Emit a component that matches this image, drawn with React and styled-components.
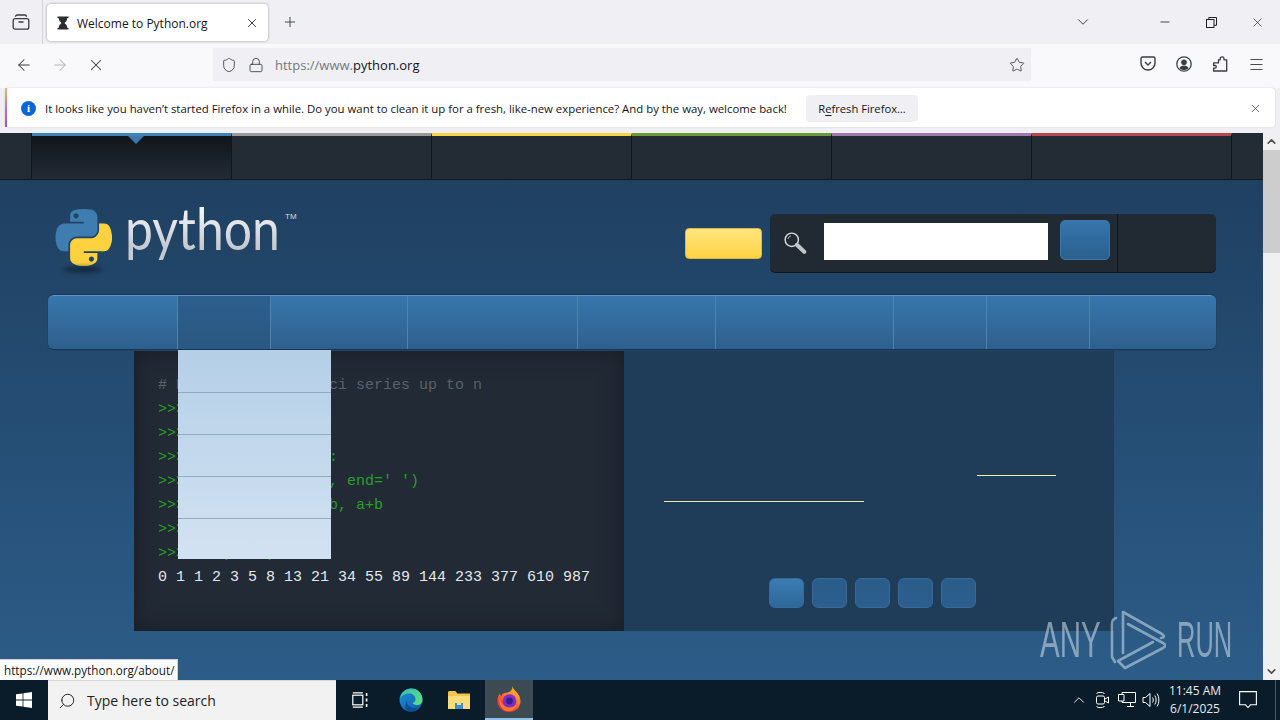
import styled, { createGlobalStyle } from "styled-components";
import { ArrowLeft, ArrowRight, X, Plus, ChevronDown, ChevronUp, Minus, Menu, Lock, Shield, Star, Search } from "lucide-react";

const UI_FONT = `"Open Sans", "Noto Sans", sans-serif`;
const ICON = "#3b3b45";

const Global = createGlobalStyle`
    html, body {
        margin: 0;
        padding: 0;
        width: 1280px;
        height: 720px;
        overflow: hidden;
        font-family: ${UI_FONT};
    }
    * {
        box-sizing: border-box;
    }
`;

const Screen = styled.div`
    width: 1280px;
    height: 720px;
    display: flex;
    flex-direction: column;
    overflow: hidden;
    background: #f0f0f4;
`;

/* browser chrome */
const TabStrip = styled.div`
    height: 44px;
    flex: none;
    display: flex;
    align-items: center;
    background: #f0f0f4;
`;

const ViewButton = styled.div`
    width: 43px;
    height: 44px;
    display: flex;
    align-items: center;
    justify-content: center;
    border-right: 1px solid #d4d4da;
`;

const Tab = styled.div`
    width: 221px;
    height: 37px;
    margin: 1px 0 0 4px;
    padding: 0 9px 0 9px;
    display: flex;
    align-items: center;
    gap: 7px;
    background: #fff;
    border-radius: 4px;
    box-shadow: 0 0 3px rgba(0, 0, 0, 0.35);
    font-size: 12px;
    color: #15141a;
`;

const TabTitle = styled.span`
    flex: 1;
    padding-top: 1px;
    white-space: nowrap;
`;

const NewTab = styled.div`
    width: 46px;
    margin-left: -1px;
    display: flex;
    justify-content: center;
`;

const StripSpacer = styled.div`
    flex: 1;
`;

const StripButton = styled.div`
    width: 46px;
    display: flex;
    justify-content: center;
    margin-right: ${(p) => p.$gap || 0}px;
`;

const NavBar = styled.div`
    height: 44px;
    flex: none;
    display: flex;
    align-items: center;
    padding: 0 0 3px 6px;
    background: #f9f9fb;
`;

const NavButton = styled.div`
    width: 36px;
    display: flex;
    justify-content: center;
    flex: none;
`;

const UrlBar = styled.div`
    width: 818px;
    height: 33px;
    margin-left: 99px;
    padding: 0 6px 0 8px;
    display: flex;
    align-items: center;
    gap: 11px;
    background: #f0f0f4;
    font-size: 13px;
    color: #15141a;
`;

const UrlText = styled.div`
    flex: 1;
    white-space: nowrap;
    span {
        color: #77777f;
    }
`;

const ToolButtons = styled.div`
    display: flex;
    margin-left: 99px;
`;

const ToolButton = styled.div`
    width: 36px;
    display: flex;
    justify-content: center;
`;

const NoticeWrap = styled.div`
    height: 45px;
    flex: none;
    padding: 0 5px;
    background: #f0f0f4;
`;

const Notice = styled.div`
    height: 39px;
    display: flex;
    align-items: center;
    padding: 1px 13px 0 16px;
    background: #fff;
    border-radius: 4px;
    box-shadow: 0 0 2px rgba(0, 0, 0, 0.15);
    position: relative;
    font-size: 11.38px;
    color: #15141a;
    &::before {
        content: "";
        position: absolute;
        left: 0;
        top: 0;
        bottom: 0;
        width: 2px;
        background: linear-gradient(#ffb06a, #d56ba8 50%, #8a5fd0);
    }
`;

const InfoDot = styled.div`
    width: 15px;
    height: 15px;
    margin-right: 9px;
    border-radius: 50%;
    background: #0d64db;
    color: #fff;
    display: flex;
    align-items: center;
    justify-content: center;
    font: bold 11px "Liberation Serif", serif;
`;

const NoticeText = styled.div`
    white-space: nowrap;
    width: 762px;
`;

const NoticeButton = styled.div`
    width: 112px;
    height: 27px;
    margin-left: -1px;
    display: flex;
    align-items: center;
    justify-content: center;
    background: #f0f0f4;
    border-radius: 4px;
    font-size: 11.2px;
    u {
        text-underline-offset: 2px;
    }
`;

const NoticeClose = styled.div`
    margin-left: auto;
    display: flex;
`;

/* page viewport */
const Viewport = styled.div`
    flex: 1;
    min-height: 0;
    display: flex;
    position: relative;
`;

const Page = styled.div`
    flex: 1;
    min-width: 0;
    position: relative;
    overflow: hidden;
    background: linear-gradient(#1f4061 0, #1f4061 47px, #2c5c88 100%);
`;

const MetaBar = styled.div`
    height: 47px;
    padding-left: 32px;
    display: flex;
    background: #232b35;
    border-bottom: 1px solid #141a21;
`;

const MetaTab = styled.div`
    width: 200px;
    border-top: 3px solid ${(p) => p.$color};
    border-right: 1px solid #11161c;
    position: relative;
    background: ${(p) => p.$active ? "linear-gradient(#10151a, #232b35)" : "transparent"};
    box-shadow: ${(p) => p.$active ? "-1px 0 0 #11161c" : "none"};
    &::after {
        content: ${(p) => p.$active ? '""' : "none"};
        position: absolute;
        left: 96px;
        top: 0;
        border: 8px solid transparent;
        border-top: 8px solid #3a78ad;
        border-bottom: 0;
    }
`;

const Header = styled.div`
    height: 115px;
    padding: 29px 47px 0 48px;
    display: flex;
    align-items: flex-start;
`;

const Logo = styled.div`
    display: flex;
    align-items: flex-start;
    margin-left: 7px;
    position: relative;
`;

const Wordmark = styled.div`
    width: 190px;
    margin: -19px -37px 0 13px;
    font: 400 58px/76px "Lato", sans-serif;
    white-space: nowrap;
    transform: scaleX(0.86);
    transform-origin: left center;
    background: linear-gradient(#f0f2f4 30%, #c4cad0 75%);
    -webkit-background-clip: text;
    background-clip: text;
    color: transparent;
`;

const Trademark = styled.div`
    margin: 3px 0 0 7px;
    font: 8px "Liberation Sans", sans-serif;
    color: #d6dade;
`;

const LogoShadow = styled.div`
    position: absolute;
    left: 8px;
    top: 57px;
    width: 40px;
    height: 7px;
    border-radius: 50%;
    background: rgba(10, 22, 34, 0.55);
    filter: blur(2px);
`;

const HeaderRight = styled.div`
    margin-left: auto;
    display: flex;
    align-items: center;
    gap: 8px;
    margin-top: 5px;
`;

const DonateButton = styled.div`
    width: 77px;
    height: 31px;
    margin-top: 1px;
    border-radius: 4px;
    border: 1px solid #e0b93f;
    background: linear-gradient(#ffe57e, #ffd343);
`;

const SearchPanel = styled.div`
    width: 446px;
    height: 58px;
    display: flex;
    align-items: center;
    padding-left: 13px;
    border-radius: 5px;
    background: #212a33;
    box-shadow: 0 1px 0 #11161c;
`;

const SearchInput = styled.div`
    width: 224px;
    height: 37px;
    margin: 0 12px 3px 17px;
    background: #fff;
`;

const GoButton = styled.div`
    width: 50px;
    height: 40px;
    margin-bottom: 6px;
    border-radius: 5px;
    border: 1px solid #3d77a8;
    background: linear-gradient(#3675ab, #2b5f8e);
`;

const PanelDivider = styled.div`
    width: 1px;
    height: 58px;
    margin-left: 7px;
    background: #10151b;
`;

const MainNav = styled.div`
    position: relative;
    width: 1168px;
    height: 54px;
    margin-left: 48px;
    display: flex;
    border-radius: 6px;
    border-top: 1px solid #5b93c4;
    background: linear-gradient(#3776ac, #33699a 60%, #2d5f8c);
    box-shadow: 0 1px 1px #17334d, 0 -1px 1px #1a3a58;
`;

const NavItem = styled.div`
    width: ${(p) => p.$w}px;
    flex: none;
    border-right: 1px solid #4f83b0;
    background: ${(p) => p.$hover ? "linear-gradient(#2d5f8d, #2a5882)" : "transparent"};
    position: relative;
    &:last-child {
        border-right: 0;
    }
`;

const Dropdown = styled.div`
    position: absolute;
    z-index: 3;
    left: 0;
    top: 54px;
    width: 153px;
    height: 209px;
    overflow: hidden;
    background: linear-gradient(#b4cfe7, #d3e2f2);
`;

const DropRow = styled.div`
    height: 42px;
    border-top: 1px solid #96aabd;
    &:first-child {
        border-top: 0;
    }
`;

const Hero = styled.div`
    width: 980px;
    height: 280px;
    margin: 2px 0 0 134px;
    display: flex;
`;

const CodePanel = styled.div`
    width: 490px;
    padding: 22px 0 0 24px;
    background: #222a35;
    box-shadow: inset 0 0 22px #171d25;
    white-space: pre;
`;

const CodeLine = styled.div`
    height: 24px;
    color: ${(p) => p.$color};
    font: 15px/25px "Liberation Mono", monospace;
`;

const SlidePanel = styled.div`
    width: 490px;
    position: relative;
    display: flex;
    align-items: flex-end;
    justify-content: center;
    padding: 0 0 23px 6px;
    gap: 8px;
    background: #1f3c59;
`;

const LinkLine = styled.div`
    position: absolute;
    left: ${(p) => p.$x}px;
    top: ${(p) => p.$y}px;
    width: ${(p) => p.$w}px;
    height: 1px;
    background: #f2eea0;
`;

const Dot = styled.div`
    width: 35px;
    height: 30px;
    border-radius: 6px;
    border: 1px solid #37699a;
    background: ${(p) => p.$on ? "linear-gradient(#3a7cb3, #2f6799)" : "linear-gradient(#2b5c8a, #2c5f8e)"};
`;

const PageScrollbar = styled.div`
    width: 17px;
    flex: none;
    display: flex;
    flex-direction: column;
    align-items: center;
    background: #f0f0f0;
`;

const ScrollArrow = styled.div`
    height: 17px;
    flex: none;
    display: flex;
    align-items: center;
    justify-content: center;
`;

const ScrollThumb = styled.div`
    width: 17px;
    height: 103px;
    background: #cdcdcd;
`;

const ScrollTrack = styled.div`
    flex: 1;
`;

const StatusTip = styled.div`
    position: absolute;
    z-index: 4;
    left: 0;
    bottom: 0;
    width: 178px;
    height: 21px;
    padding: 3px 0 0 4px;
    background: #fff;
    border-top: 1px solid #d0d0d0;
    border-right: 1px solid #d0d0d0;
    font-size: 11.7px;
    line-height: 15px;
    color: #15141a;
    white-space: nowrap;
`;

const Watermark = styled.div`
    position: absolute;
    z-index: 2;
    left: 1040px;
    top: 476px;
    height: 62px;
    display: flex;
    align-items: center;
    color: rgba(196, 213, 226, 0.6);
    font: 400 50px/62px "Liberation Sans", sans-serif;
`;

const WatermarkWord = styled.span`
    display: inline-block;
    width: ${(p) => p.$w}px;
    margin-right: ${(p) => p.$gap || 0}px;
    transform: scaleX(${(p) => p.$scale});
    transform-origin: left center;
    white-space: nowrap;
`;

const PlayWrap = styled.div`
    display: flex;
    margin-right: 11px;
`;

/* windows taskbar */
const Taskbar = styled.div`
    height: 40px;
    flex: none;
    display: flex;
    align-items: center;
    background: #0a1c29;
`;

const StartButton = styled.div`
    width: 48px;
    display: flex;
    justify-content: center;
`;

const SearchBox = styled.div`
    width: 288px;
    height: 40px;
    padding-left: 10px;
    display: flex;
    align-items: center;
    gap: 11px;
    background: #f2f2f2;
    border-top: 1px solid #d8d8d8;
    font-size: 14px;
    color: #222;
`;

const SearchGlass = styled(Search)`
    transform: scaleX(-1);
`;

const TaskIcon = styled.div`
    width: 48px;
    height: 40px;
    margin-left: ${(p) => p.$gap || 0}px;
    display: flex;
    align-items: center;
    justify-content: center;
    background: ${(p) => p.$active ? "#3d4a52" : "transparent"};
    border-bottom: ${(p) => p.$active ? "2px solid #8fc3ea" : "0"};
`;

const Tray = styled.div`
    margin-left: auto;
    display: flex;
    align-items: center;
    color: #fff;
`;

const TrayIcon = styled.div`
    width: 24px;
    display: flex;
    justify-content: center;
`;

const Clock = styled.div`
    width: 61px;
    padding-left: 3px;
    text-align: center;
    white-space: nowrap;
    font-size: 12px;
    line-height: 18px;
    color: #e6eaed;
`;

const NoticeCentre = styled.div`
    width: 48px;
    display: flex;
    justify-content: center;
`;

const ShowDesktop = styled.div`
    width: 5px;
    height: 40px;
    margin-left: 3px;
    border-left: 1px solid #4d5a63;
`;

const Hourglass = () => (
    <svg width="14" height="14" viewBox="0 0 14 14" fill="#2c2c33">
        <path d="M1.5 0.5h11v1.6h-1.2c0 2.4-1.4 3.8-2.8 4.9 1.4 1.1 2.8 2.5 2.8 4.9h1.2v1.6h-11v-1.6h1.2c0-2.4 1.4-3.8 2.8-4.9C4.1 5.9 2.7 4.5 2.7 2.1H1.5z" />
    </svg>
);

const FirefoxView = () => (
    <svg width="18" height="16" viewBox="0 0 18 16" fill="none" stroke={ICON} strokeWidth="1.3">
        <rect x="1.2" y="4.6" width="15.6" height="10.6" rx="2" />
        <path d="M3.5 2.8c0-.9.5-1.8 1.7-1.8h7.6c1.2 0 1.7.9 1.7 1.8M6.5 8h5" />
    </svg>
);

const RestoreIcon = () => (
    <svg width="11" height="11" viewBox="0 0 11 11" fill="none" stroke="#222" strokeWidth="1">
        <rect x="0.5" y="2.5" width="7.5" height="8" />
        <path d="M2.8 2.5V0.5h7.7v7.8H8" />
    </svg>
);

const PocketIcon = () => (
    <svg width="16" height="15" viewBox="0 0 16 15" fill="none" stroke={ICON} strokeWidth="1.4">
        <path d="M2.5 1h11c.9 0 1.5.6 1.5 1.5V7c0 3.8-3.1 7-7 7s-7-3.2-7-7V2.500C1 1.600 1.600 1 2.500 1z" />
        <path d="M5 6l3 3 3-3" />
    </svg>
);

const AccountIcon = () => (
    <svg width="16" height="16" viewBox="0 0 16 16">
        <circle cx="8" cy="8" r="7.2" fill="none" stroke={ICON} strokeWidth="1.3" />
        <circle cx="8" cy="6.2" r="2.8" fill={ICON} />
        <path d="M3.4 12.200c.8-1.800 2.600-2.600 4.600-2.600s3.800.8 4.600 2.600c-1.200 1.200-2.800 1.800-4.600 1.800s-3.400-.6-4.600-1.800z" fill={ICON} />
    </svg>
);

const ExtensionIcon = () => (
    <svg width="16" height="16" viewBox="0 0 16 16" fill="none" stroke={ICON} strokeWidth="1.3" strokeLinejoin="round">
        <path d="M6.500 3.800h1.700V2.600c0-2.300 3.800-2.300 3.800 0v1.200h2.700v11.200H1.600v-2.800h1.500c1.600 0 1.600-2.700 0-2.700H1.600V6.800h4.900z" />
    </svg>
);

const PythonLogo = () => (
    <svg width="57" height="57" viewBox="0 0 110 112">
        <path fill="#3f7cb0" d="M54.919 0.001C50.335 0.022 45.958 0.413 42.106 1.095C30.760 3.099 28.700 7.295 28.700 15.032V25.250H55.513V28.656H28.700H18.638C10.845 28.656 4.022 33.340 1.888 42.250C-0.574 52.463 -0.683 58.836 1.888 69.500C3.794 77.438 8.345 83.094 16.138 83.094H25.356V70.844C25.356 61.994 33.014 54.188 42.106 54.188H68.888C76.343 54.188 82.294 48.049 82.294 40.563V15.032C82.294 7.766 76.164 2.307 68.888 1.095C64.282 0.328 59.503 -0.020 54.919 0.001ZM40.419 8.219C43.189 8.219 45.450 10.518 45.450 13.344C45.450 16.160 43.189 18.438 40.419 18.438C37.639 18.438 35.388 16.160 35.388 13.344C35.388 10.518 37.639 8.219 40.419 8.219Z" />
        <path fill="#fdd23e" d="M85.638 28.656V40.563C85.638 49.794 77.812 57.563 68.888 57.563H42.106C34.770 57.563 28.700 63.841 28.700 71.188V96.719C28.700 103.985 35.019 108.259 42.106 110.344C50.593 112.839 58.732 113.290 68.888 110.344C75.638 108.389 82.294 104.456 82.294 96.719V86.500H55.513V83.094H82.294H95.700C103.493 83.094 106.397 77.658 109.106 69.500C111.905 61.101 111.786 53.025 109.106 42.250C107.181 34.492 103.503 28.656 95.700 28.656H85.638ZM70.575 93.313C73.355 93.313 75.606 95.591 75.606 98.407C75.606 101.233 73.355 103.532 70.575 103.532C67.805 103.532 65.544 101.233 65.544 98.407C65.544 95.591 67.805 93.313 70.575 93.313Z" />
    </svg>
);

const Magnifier = () => (
    <svg width="24" height="24" viewBox="0 0 26 26" fill="none">
        <circle cx="9.5" cy="9.5" r="7.2" stroke="#d5d8da" strokeWidth="1.6" />
        <path d="M5.5 8.5c.4-1.600 1.500-2.800 3-3.100" stroke="#d5d8da" strokeWidth="1" />
        <path d="M15 15l8 7.500" stroke="#c3c6c9" strokeWidth="4.4" strokeLinecap="round" />
    </svg>
);

const PlayMark = () => (
    <svg width="56" height="62" viewBox="9 4 56 62" fill="none" stroke="rgba(196,213,226,0.6)" strokeWidth="2.6" strokeLinejoin="round" strokeLinecap="round">
        <path d="M15 13c-3 1-4 3-4 6v33l3 5" />
        <path d="M22 48V7l39 22c3 2 2 4-1 4" />
        <path d="M27 19l35 19c3 2 3 3 0 5L24 63l-7-7 35-19" />
    </svg>
);

const WindowsLogo = () => (
    <svg width="16" height="16" viewBox="0 0 16 16" fill="#fff">
        <path d="M0 2.300l6.600-.9v6.200H0zM7.400 1.300L16 0v7.600H7.400zM0 8.400h6.600v6.200L0 13.700zM7.400 8.400H16V16l-8.600-1.300z" />
    </svg>
);

const TaskViewIcon = () => (
    <svg width="16" height="16" viewBox="0 0 16 16" fill="none" stroke="#fff" strokeWidth="1.2">
        <rect x="0.8" y="3.2" width="10" height="9.6" />
        <path d="M0.8 0.8h10M0.8 15.200h10" />
        <path d="M14.600 1v3M14.600 6.500v3M14.600 12v3" strokeWidth="1.6" />
    </svg>
);

const EdgeIcon = () => (
    <svg width="24" height="24" viewBox="0 0 24 24">
        <defs>
            <linearGradient id="edgeA" x1="0" y1="0" x2="1" y2="1">
                <stop offset="0" stopColor="#35c1b2" />
                <stop offset="1" stopColor="#5ee07a" />
            </linearGradient>
            <linearGradient id="edgeB" x1="0" y1="0" x2="1" y2="1">
                <stop offset="0" stopColor="#1a8fd8" />
                <stop offset="1" stopColor="#0f5fa8" />
            </linearGradient>
        </defs>
        <circle cx="12" cy="12" r="11.500" fill="url(#edgeB)" />
        <path d="M1 11C2 4.500 7 .5 12.500.5 18.500.5 23.500 5 23.500 12c0 3.500-2.500 5-5.500 5-2.500 0-4-1-4.500-2 2-.5 3-2 3-4 0-3-3-5.500-6-5.500C6 5.500 2.500 7.500 1 11z" fill="url(#edgeA)" />
        <path d="M8 13c0 4 3 7 7 7 1.500 0 3-.4 4.500-1.500-2 3-5 5-8 5-2 0-3.500-.8-4.500-2-1.500-2-1-6 1-8.500z" fill="#0d4f96" />
    </svg>
);

const FolderIcon = () => (
    <svg width="22" height="20" viewBox="0 0 22 20">
        <path d="M0 2.500C0 1.700.6 1 1.400 1h6l2 2.500H22V19H0z" fill="#f2c44f" />
        <path d="M0 6h22v13H0z" fill="#fbdc78" />
        <path d="M7 13h8v6H7z" fill="#3a8fd4" />
        <path d="M9 13h4v2H9z" fill="#fbdc78" />
    </svg>
);

const FirefoxIcon = () => (
    <svg width="24" height="26" viewBox="0 0 24 26">
        <defs>
            <linearGradient id="foxA" x1="0.8" y1="0" x2="0.2" y2="1">
                <stop offset="0" stopColor="#ffc629" />
                <stop offset="0.5" stopColor="#ff6b2c" />
                <stop offset="1" stopColor="#e5244f" />
            </linearGradient>
        </defs>
        <path d="M15.500 0c.5 3 2.300 4 4 6 2.500 2.900 4 5.600 4 9.200C23.500 21.500 18.500 26 12 26S.5 21.200.5 15c0-2.800.8-5.400 2.300-7.400.2 1.200.7 2 1.500 2.700C5 7.500 7 7 9.500 6.800 13 6.500 15.800 4 15.500 0z" fill="url(#foxA)" />
        <circle cx="12.500" cy="15" r="6.800" fill="#7b2fc9" />
        <circle cx="12.500" cy="15" r="3.400" fill="#3a1d8f" />
        <path d="M2.500 13c1.500 5 5.500 8.500 10.500 8.500 3 0 5.500-1.300 7-3.300-1 4-4.500 6.800-8.500 6.800-5 0-9.500-4.500-9-12z" fill="#ff7a2e" />
    </svg>
);

const MeetIcon = () => (
    <svg width="18" height="20" viewBox="0 0 18 20" fill="none" stroke="#fff" strokeWidth="1">
        <rect x="2.500" y="6" width="8" height="8" rx="1.500" />
        <path d="M11 9l3.500-2v6L11 11M2.500 3.500C4 2 8 2 10.500 3.500M2.500 16.500C4 18 8 18 10.500 16.500" />
    </svg>
);

const NetworkIcon = () => (
    <svg width="18" height="16" viewBox="0 0 18 16" fill="none" stroke="#fff" strokeWidth="1">
        <path d="M4 .5h13.500v10H4zM9 14.500h7M12.500 10.500v4" />
        <path d="M.5 2.500h5.500v6.500H.5z" fill="#0a1c29" />
    </svg>
);

const VolumeIcon = () => (
    <svg width="18" height="16" viewBox="0 0 18 16" fill="none" stroke="#fff" strokeWidth="1">
        <path d="M1 5.500h2.500L8 1.500v13l-4.500-4H1z" />
        <path d="M10.500 5.500c1 1.500 1 3.500 0 5M12.800 3.500c1.800 2.500 1.800 6.500 0 9M15 1.500c2.500 3.500 2.500 9.500 0 13" />
    </svg>
);

const ChatIcon = () => (
    <svg width="18" height="18" viewBox="0 0 18 18" fill="none" stroke="#fff" strokeWidth="1.1">
        <path d="M.6.6h16.800v13.200H11.500L9 16.500 6.500 13.800H.6z" />
    </svg>
);

const metaTabs = ["#3f83bd", "#9a9a9a", "#ffd343", "#6a9b36", "#a277b0", "#b8494a"];
const navWidths = [130, 93, 137, 170, 138, 178, 93, 103, 126];
const codeLines = [
    ["#57626d", "# Python 3: Fibonacci series up to n"],
    ["#26a026", ">>> def fib(n):"],
    ["#26a026", ">>>     a, b = 0, 1"],
    ["#26a026", ">>>     while a < n:"],
    ["#26a026", ">>>         print(a, end=' ')"],
    ["#26a026", ">>>         a, b = b, a+b"],
    ["#26a026", ">>>     print()"],
    ["#26a026", ">>> fib(1000)"],
    ["#e4e8ea", "0 1 1 2 3 5 8 13 21 34 55 89 144 233 377 610 987"],
];

const App = () => {
    return (
        <Screen>
            <Global />
            <TabStrip>
                <ViewButton>
                    <FirefoxView />
                </ViewButton>
                <Tab>
                    <Hourglass />
                    <TabTitle>Welcome to Python.org</TabTitle>
                    <X size={14} color="#2c2c33" strokeWidth={1.6} />
                </Tab>
                <NewTab>
                    <Plus size={16} color={ICON} strokeWidth={1.4} />
                </NewTab>
                <StripSpacer />
                <StripButton $gap={36}>
                    <ChevronDown size={18} color={ICON} strokeWidth={1.3} />
                </StripButton>
                <StripButton>
                    <Minus size={14} color="#222" strokeWidth={1.4} />
                </StripButton>
                <StripButton>
                    <RestoreIcon />
                </StripButton>
                <StripButton>
                    <X size={15} color="#222" strokeWidth={1.1} />
                </StripButton>
            </TabStrip>

            <NavBar>
                <NavButton>
                    <ArrowLeft size={18} color={ICON} strokeWidth={1.4} />
                </NavButton>
                <NavButton>
                    <ArrowRight size={18} color="#b5b5bb" strokeWidth={1.4} />
                </NavButton>
                <NavButton>
                    <X size={18} color={ICON} strokeWidth={1.4} />
                </NavButton>
                <UrlBar>
                    <Shield size={16} color={ICON} strokeWidth={1.3} />
                    <Lock size={16} color={ICON} strokeWidth={1.3} />
                    <UrlText>
                        <span>https://www.</span>python.org
                    </UrlText>
                    <Star size={16} color={ICON} strokeWidth={1.3} />
                </UrlBar>
                <ToolButtons>
                    <ToolButton>
                        <PocketIcon />
                    </ToolButton>
                    <ToolButton>
                        <AccountIcon />
                    </ToolButton>
                    <ToolButton>
                        <ExtensionIcon />
                    </ToolButton>
                    <ToolButton>
                        <Menu size={17} color={ICON} strokeWidth={1.3} />
                    </ToolButton>
                </ToolButtons>
            </NavBar>

            <NoticeWrap>
                <Notice>
                    <InfoDot>i</InfoDot>
                    <NoticeText>It looks like you haven’t started Firefox in a while. Do you want to clean it up for a fresh, like-new experience? And by the way, welcome back!</NoticeText>
                    <NoticeButton>
                        <span>
                            R<u>e</u>fresh Firefox…
                        </span>
                    </NoticeButton>
                    <NoticeClose>
                        <X size={13} color={ICON} strokeWidth={1.4} />
                    </NoticeClose>
                </Notice>
            </NoticeWrap>

            <Viewport>
                <Page>
                    <MetaBar>
                        {metaTabs.map((color, i) => (
                            <MetaTab key={color} $color={color} $active={i === 0} />
                        ))}
                    </MetaBar>
                    <Header>
                        <Logo>
                            <PythonLogo />
                            <LogoShadow />
                            <Wordmark>python</Wordmark>
                            <Trademark>TM</Trademark>
                        </Logo>
                        <HeaderRight>
                            <DonateButton />
                            <SearchPanel>
                                <Magnifier />
                                <SearchInput />
                                <GoButton />
                                <PanelDivider />
                            </SearchPanel>
                        </HeaderRight>
                    </Header>
                    <MainNav>
                        {navWidths.map((w, i) => (
                            <NavItem key={i} $w={w} $hover={i === 1}>
                                {i === 1 && (
                                    <Dropdown>
                                        <DropRow />
                                        <DropRow />
                                        <DropRow />
                                        <DropRow />
                                        <DropRow />
                                    </Dropdown>
                                )}
                            </NavItem>
                        ))}
                    </MainNav>
                    <Hero>
                        <CodePanel>
                            {codeLines.map(([color, text]) => (
                                <CodeLine key={text} $color={color}>
                                    {text}
                                </CodeLine>
                            ))}
                        </CodePanel>
                        <SlidePanel>
                            <LinkLine $x={353} $y={124} $w={79} />
                            <LinkLine $x={40} $y={150} $w={200} />
                            <Dot $on />
                            <Dot />
                            <Dot />
                            <Dot />
                            <Dot />
                        </SlidePanel>
                    </Hero>
                    <Watermark>
                        <WatermarkWord $w={61} $gap={9} $scale={0.59}>
                            ANY
                        </WatermarkWord>
                        <PlayWrap>
                            <PlayMark />
                        </PlayWrap>
                        <WatermarkWord $w={55} $scale={0.51}>
                            RUN
                        </WatermarkWord>
                    </Watermark>
                </Page>
                <PageScrollbar>
                    <ScrollArrow>
                        <ChevronUp size={13} color="#505050" strokeWidth={3} />
                    </ScrollArrow>
                    <ScrollThumb />
                    <ScrollTrack />
                    <ScrollArrow>
                        <ChevronDown size={13} color="#505050" strokeWidth={3} />
                    </ScrollArrow>
                </PageScrollbar>
                <StatusTip>https://www.python.org/about/</StatusTip>
            </Viewport>

            <Taskbar>
                <StartButton>
                    <WindowsLogo />
                </StartButton>
                <SearchBox>
                    <SearchGlass size={18} color="#222" strokeWidth={1.3} />
                    Type here to search
                </SearchBox>
                <TaskIcon>
                    <TaskViewIcon />
                </TaskIcon>
                <TaskIcon $gap={3}>
                    <EdgeIcon />
                </TaskIcon>
                <TaskIcon>
                    <FolderIcon />
                </TaskIcon>
                <TaskIcon $active $gap={2}>
                    <FirefoxIcon />
                </TaskIcon>
                <Tray>
                    <TrayIcon>
                        <ChevronUp size={18} color="#fff" strokeWidth={1.2} />
                    </TrayIcon>
                    <TrayIcon>
                        <MeetIcon />
                    </TrayIcon>
                    <TrayIcon>
                        <NetworkIcon />
                    </TrayIcon>
                    <TrayIcon>
                        <VolumeIcon />
                    </TrayIcon>
                    <Clock>
                        11:45 AM
                        <br />
                        6/1/2025
                    </Clock>
                    <NoticeCentre>
                        <ChatIcon />
                    </NoticeCentre>
                    <ShowDesktop />
                </Tray>
            </Taskbar>
        </Screen>
    );
};

export default App;
